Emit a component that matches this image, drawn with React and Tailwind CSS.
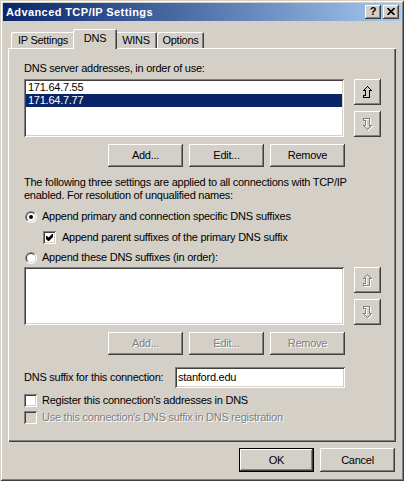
import React from "react";

const RAISED =
  "shadow-[inset_-1px_-1px_#404040,inset_1px_1px_#ffffff,inset_-2px_-2px_#808080,inset_2px_2px_#d4d0c8]";
const SUNKEN =
  "shadow-[inset_1px_1px_#808080,inset_-1px_-1px_#ffffff,inset_2px_2px_#404040,inset_-2px_-2px_#d4d0c8]";
const DIS = "text-[#808080] [text-shadow:1px_1px_0_#ffffff]";

function Btn({ children, disabled, isDefault, className = "" }) {
  return (
    <div
      className={`w-[75px] h-[23px] bg-[#d4d0c8] flex items-center justify-center ${RAISED} ${
        isDefault ? "border border-black" : ""
      } ${disabled ? DIS : ""} ${className}`}
    >
      {children}
    </div>
  );
}

function ArrowIcon({ down, disabled }) {
  const d = "M4.5 0.5 L8.5 4.5 L6.5 4.5 L6.5 11.5 L0.5 11.5 L0.5 9.5 L2.5 9.5 L2.5 4.5 L0.5 4.5 Z";
  const tf = down ? "translate(0 12) scale(1 -1)" : undefined;
  return (
    <svg width="10" height="13" viewBox="0 0 10 13" shapeRendering="crispEdges">
      {disabled && (
        <g transform="translate(1 1)">
          <path d={d} transform={tf} fill="none" stroke="#ffffff" strokeWidth="1" />
        </g>
      )}
      <path d={d} transform={tf} fill="none" stroke={disabled ? "#808080" : "#000000"} strokeWidth="1" />
    </svg>
  );
}

function ArrowBtn({ down, disabled }) {
  return (
    <div className={`w-[27px] h-[26px] bg-[#d4d0c8] flex items-center justify-center pl-[1px] ${RAISED}`}>
      <ArrowIcon down={down} disabled={disabled} />
    </div>
  );
}

function Radio({ checked }) {
  return (
    <svg width="12" height="12" viewBox="0 0 12 12" className="shrink-0">
      <circle cx="6" cy="6" r="6" fill="#ffffff" />
      <path d="M1.757 10.243 A6 6 0 0 1 10.243 1.757 Z" fill="#808080" />
      <circle cx="6" cy="6" r="5" fill="#d4d0c8" />
      <path d="M2.464 9.536 A5 5 0 0 1 9.536 2.464 Z" fill="#404040" />
      <circle cx="6" cy="6" r="4" fill="#ffffff" />
      {checked && <circle cx="6" cy="6" r="2" fill="#000000" />}
    </svg>
  );
}

function Check({ checked, disabled }) {
  return (
    <div
      className={`relative w-[13px] h-[13px] shrink-0 ${disabled ? "bg-[#d4d0c8]" : "bg-white"} ${SUNKEN}`}
    >
      {checked && (
        <svg className="absolute left-0 top-0" width="13" height="13" viewBox="0 0 13 13">
          <path d="M3 5 L4 5 L5.5 6.5 L9 3 L10 3 L10 6 L6 10 L5 10 L3 8 Z" fill="#000000" />
        </svg>
      )}
    </div>
  );
}

function ListBox({ items = [], selected = -1 }) {
  return (
    <div className={`w-[320px] h-[58px] bg-white p-[2px] ${SUNKEN}`}>
      {items.map((it, i) => (
        <div
          key={it}
          className={`h-[13px] pl-[2px] leading-[13px] ${
            i === selected ? "bg-[#0a246a] text-white" : "text-black"
          }`}
        >
          {it}
        </div>
      ))}
    </div>
  );
}

function Tab({ label, selected, w }) {
  if (selected) {
    return (
      <div
        className={`relative z-10 ${w} h-[20px] -mx-[2px] -mb-[1px] bg-[#d4d0c8] rounded-t-[2px] shadow-[inset_1px_1px_#ffffff,inset_-1px_0_#404040,inset_-2px_0_#808080] flex justify-center pt-[3px]`}
      >
        {label}
      </div>
    );
  }
  return (
    <div
      className={`${w} h-[16px] bg-[#d4d0c8] rounded-t-[2px] shadow-[inset_1px_1px_#ffffff,inset_-1px_0_#404040,inset_-2px_0_#808080] flex justify-center pt-[2px]`}
    >
      {label}
    </div>
  );
}

export default function App() {
  return (
    <div className="w-[404px] h-[481px] bg-[#d4d0c8] p-[3px] flex flex-col shadow-[inset_1px_1px_#d4d0c8,inset_-1px_-1px_#404040,inset_2px_2px_#ffffff,inset_-2px_-2px_#808080] [font-family:'Liberation_Sans',Arial,sans-serif] text-[11px] leading-[13px] tracking-[-0.25px] text-black select-none overflow-hidden">
      {/* Title bar */}
      <div className="h-[18px] flex items-center bg-linear-to-r from-[#0a246a] to-[#a6caf0] pl-[3px] pr-[2px] shrink-0">
        <span className="flex-1 text-white font-bold text-[11px] tracking-[0.4px] whitespace-nowrap">
          Advanced TCP/IP Settings
        </span>
        <div className={`w-[16px] h-[14px] bg-[#d4d0c8] flex items-center justify-center ${RAISED}`}>
          <span className="font-bold text-[11px] leading-[11px] tracking-normal text-black -mt-[1px]">?</span>
        </div>
        <div className={`ml-[2px] w-[16px] h-[14px] bg-[#d4d0c8] flex items-center justify-center ${RAISED}`}>
          <svg width="8" height="7" viewBox="0 0 8 7" className="-mt-[1px]">
            <path d="M0.5 0 L7.5 7 M7.5 0 L0.5 7" stroke="#000" strokeWidth="1.6" />
          </svg>
        </div>
      </div>

      {/* Tabs */}
      <div className="mt-[8px] h-[19px] flex items-end pl-[8px] shrink-0">
        <Tab label="IP Settings" w="w-[64px]" />
        <Tab label="DNS" w="w-[44px]" selected />
        <Tab label="WINS" w="w-[42px]" />
        <Tab label="Options" w="w-[47px]" />
      </div>

      {/* Panel */}
      <div className="ml-[5px] w-[388px] h-[394px] shrink-0 shadow-[inset_1px_1px_#ffffff,inset_-1px_-1px_#404040,inset_-2px_-2px_#808080] pl-[16px] pt-[14px] flex flex-col">
        <div className="h-[13px] whitespace-nowrap">DNS server addresses, in order of use:</div>
        <div className="flex mt-[4px]">
          <ListBox items={["171.64.7.55", "171.64.7.77"]} selected={1} />
          <div className="ml-[10px] flex flex-col gap-[6px]">
            <ArrowBtn />
            <ArrowBtn down disabled />
          </div>
        </div>
        <div className="flex mt-[7px] ml-[84px] gap-[6px]">
          <Btn>Add...</Btn>
          <Btn>Edit...</Btn>
          <Btn>Remove</Btn>
        </div>

        <div className="mt-[9px] whitespace-nowrap">
          The following three settings are applied to all connections with TCP/IP
          <br />
          enabled. For resolution of unqualified names:
        </div>

        <div className="mt-[8px] h-[13px] flex items-center pl-[1px] whitespace-nowrap">
          <Radio checked />
          <span className="ml-[5px]">Append primary and connection specific DNS suffixes</span>
        </div>
        <div className="mt-[8px] h-[13px] flex items-center pl-[19px] whitespace-nowrap">
          <Check checked />
          <span className="ml-[6px]">Append parent suffixes of the primary DNS suffix</span>
        </div>
        <div className="mt-[7px] h-[13px] flex items-center pl-[1px] whitespace-nowrap">
          <Radio />
          <span className="ml-[5px]">Append these DNS suffixes (in order):</span>
        </div>

        <div className="flex mt-[3px]">
          <ListBox />
          <div className="ml-[10px] flex flex-col gap-[6px]">
            <ArrowBtn disabled />
            <ArrowBtn down disabled />
          </div>
        </div>
        <div className="flex mt-[7px] ml-[84px] gap-[6px]">
          <Btn disabled>Add...</Btn>
          <Btn disabled>Edit...</Btn>
          <Btn disabled>Remove</Btn>
        </div>

        <div className="mt-[12px] flex items-center whitespace-nowrap">
          <span className="w-[151px]">DNS suffix for this connection:</span>
          <div className={`w-[170px] h-[21px] bg-white pl-[3px] flex items-center ${SUNKEN}`}>
            stanford.edu
          </div>
        </div>

        <div className="mt-[6px] h-[13px] flex items-center whitespace-nowrap">
          <Check />
          <span className="ml-[5px]">Register this connection's addresses in DNS</span>
        </div>
        <div className="mt-[4px] h-[13px] flex items-center whitespace-nowrap">
          <Check disabled />
          <span className={`ml-[5px] ${DIS}`}>Use this connection's DNS suffix in DNS registration</span>
        </div>
      </div>

      {/* Bottom buttons */}
      <div className="mt-[6px] flex justify-end gap-[6px] pr-[6px] shrink-0">
        <div className="w-[75px] h-[24px] border border-black bg-[#d4d0c8] flex items-center justify-center shadow-[inset_-1px_-1px_#404040,inset_1px_1px_#ffffff,inset_-2px_-2px_#808080,inset_2px_2px_#d4d0c8]">
          OK
        </div>
        <div className={`w-[75px] h-[24px] bg-[#d4d0c8] flex items-center justify-center ${RAISED}`}>
          Cancel
        </div>
      </div>
    </div>
  );
}
